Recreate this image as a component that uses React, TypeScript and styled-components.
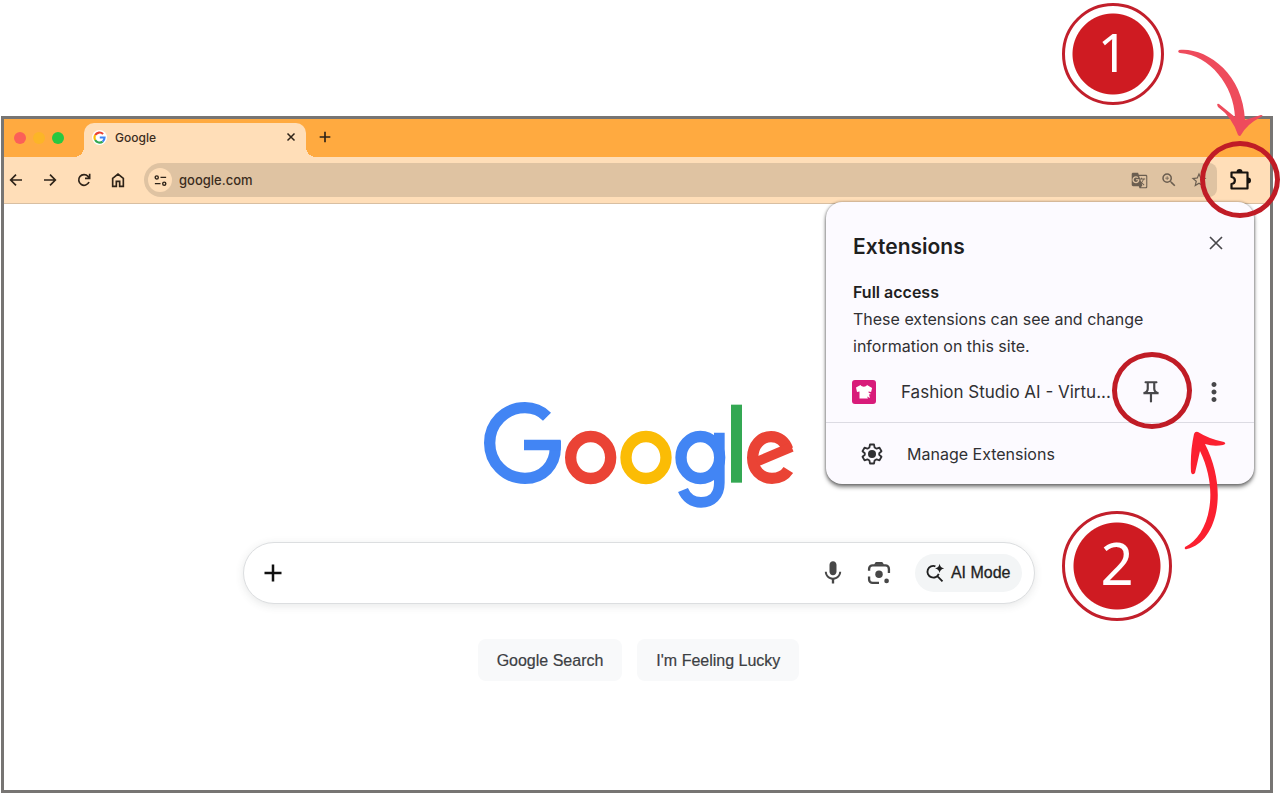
import React from "react";
import styled, { createGlobalStyle } from "styled-components";
import { MdOutlinePushPin, MdMoreVert, MdMic, MdStarBorder, MdZoomIn, MdGTranslate } from "react-icons/md";

const GlobalStyle = createGlobalStyle`
  *, *::before, *::after { box-sizing: border-box; }
  body { margin: 0; background: #fff; font-family: Inter, "Liberation Sans", sans-serif; color: #1f1f1f; }
  button, input { font: inherit; color: inherit; }
`;

const Page = styled.div`
  position: relative;
  min-height: 100vh;
  padding: 116px 7px 0 1px;
  display: flex;
  overflow: hidden;
`;

const BrowserWindow = styled.div`
  flex: 1;
  display: flex;
  flex-direction: column;
  border: 3px solid #777573;
  background: #fff;
`;

const TabStrip = styled.div`
  display: flex;
  align-items: flex-end;
  height: 38px;
  padding-left: 10px;
  background: #ffaa40;
`;

const TrafficLights = styled.div`
  display: flex;
  gap: 7px;
  align-self: center;
  width: 70px;
`;

const Light = styled.span<{ $color: string }>`
  width: 12px;
  height: 12px;
  border-radius: 50%;
  background: ${(p) => p.$color};
`;

const Tab = styled.div`
  position: relative;
  display: flex;
  align-items: center;
  gap: 8px;
  width: 222px;
  height: 34px;
  padding: 0 8px 6px;
  border-radius: 10px 10px 0 0;
  background: #ffdeb8;
  font-size: 12px;
  font-weight: 500;
  color: #3b2c1d;

  &::before, &::after {
    content: "";
    position: absolute;
    bottom: 0;
    width: 10px;
    height: 10px;
  }
  &::before { right: 100%; background: radial-gradient(circle at 0 0, transparent 10px, #ffdeb8 10px); }
  &::after { left: 100%; background: radial-gradient(circle at 100% 0, transparent 10px, #ffdeb8 10px); }
`;

const TabTitle = styled.span`
  flex: 1;
`;

const Favicon = styled.span`
  display: grid;
  place-items: center;
  width: 15px;
  height: 15px;
  border-radius: 50%;
  background: #fff;
`;

const IconButton = styled.button<{ $size?: number; $color?: string }>`
  display: grid;
  place-items: center;
  flex: none;
  width: ${(p) => p.$size ?? 20}px;
  height: ${(p) => p.$size ?? 20}px;
  padding: 0;
  border: 0;
  border-radius: 50%;
  background: none;
  color: ${(p) => p.$color ?? "#2e2318"};
  cursor: pointer;
`;

const NewTab = styled.div`
  height: 34px;
  padding: 3px 0 0 8px;
`;

const Toolbar = styled.div`
  display: flex;
  align-items: center;
  height: 47px;
  padding: 0 18px 0 2px;
  background: #ffdeb8;
  border-bottom: 1px solid #d8bfa2;
`;

const NavButtons = styled.nav`
  display: flex;
  gap: 14px;
  width: 138px;
`;

const Omnibox = styled.div`
  flex: 1;
  display: flex;
  align-items: center;
  height: 34px;
  padding: 0 8px 0 4px;
  border-radius: 17px 8px 8px 17px;
  background: #dfc3a2;
`;

const SiteInfo = styled(IconButton)`
  background: #ffdeb8;
`;

const UrlInput = styled.input`
  flex: 1;
  min-width: 0;
  padding: 0 0 0 7px;
  border: 0;
  outline: 0;
  background: none;
  font-size: 13px;
  font-weight: 500;
  color: #3b2c1d;
`;

const OmniboxActions = styled.div`
  display: flex;
  gap: 10px;
`;

const ExtensionSlot = styled.div`
  display: flex;
  padding-left: 11px;
`;

const Content = styled.main`
  flex: 1;
  display: flex;
  flex-direction: column;
  align-items: center;
  padding: 197px 22px 0 25px;
`;

const SearchForm = styled.form`
  display: flex;
  flex-direction: column;
  align-items: center;
  gap: 35px;
  width: 100%;
  max-width: 792px;
  margin-top: 33px;
`;

const SearchBox = styled.div`
  display: flex;
  align-items: center;
  width: 100%;
  height: 62px;
  padding: 0 12px 0 17px;
  border: 1px solid #dcdee0;
  border-radius: 31px;
  background: #fff;
  box-shadow: 0 2px 8px rgba(60, 64, 67, 0.12);
`;

const SearchInput = styled.input`
  flex: 1;
  min-width: 0;
  border: 0;
  outline: 0;
  padding: 0 12px;
  background: none;
  font-size: 16px;
`;

const SearchTools = styled.div`
  display: flex;
  align-items: center;
  gap: 18px;
`;

const AiMode = styled.button`
  display: flex;
  align-items: center;
  gap: 6px;
  height: 38px;
  margin-left: 4px;
  padding: 0 11px 0 10px;
  border: 0;
  border-radius: 19px;
  background: #f3f5f6;
  font-family: "Liberation Sans", Arial, sans-serif;
  font-size: 16px;
  color: #1f1f1f;
  -webkit-text-stroke: 0.3px #1f1f1f;
`;

const SearchButtons = styled.div`
  display: flex;
  gap: 15px;
`;

const SearchButton = styled.button`
  height: 42px;
  padding: 1px 19px 0;
  border: 0;
  border-radius: 8px;
  background: #f8f9fa;
  font-family: "Liberation Sans", Arial, sans-serif;
  font-size: 16px;
  color: #3c4043;
  -webkit-text-stroke: 0.2px #3c4043;
`;

const Popup = styled.section`
  position: absolute;
  top: 202px;
  right: 26px;
  width: 428px;
  border-radius: 16px;
  background: #fcfaff;
  box-shadow: 0 3px 4px rgba(0, 0, 0, 0.5), 0 0 3px rgba(0, 0, 0, 0.4);
`;

const PopupHeader = styled.header`
  display: flex;
  align-items: flex-start;
  justify-content: space-between;
  padding: 29px 26px 0 27px;
`;

const PopupTitle = styled.h2`
  margin: 0;
  font-size: 21px;
  line-height: 32px;
  font-weight: 600;
`;

const Access = styled.div`
  padding: 15px 27px 1px;
  font-size: 16px;
  line-height: 27px;
  color: #303033;
`;

const AccessTitle = styled.h3`
  margin: 0;
  font-size: 16px;
  line-height: 28px;
  font-weight: 600;
  color: #1f1f1f;
`;

const AccessText = styled.p`
  margin: 0;
  max-width: 320px;
`;

const ExtensionRow = styled.div`
  display: flex;
  align-items: center;
  height: 62px;
  padding: 0 25px 0 26px;
  border-bottom: 1px solid #dcdbe3;
  font-size: 17px;
  color: #303033;
`;

const ExtensionName = styled.span`
  flex: 1;
  padding-left: 25px;
  white-space: nowrap;
`;

const RowActions = styled.div`
  display: flex;
  align-items: center;
  gap: 35px;
`;

const ManageButton = styled.button`
  display: flex;
  align-items: center;
  gap: 23px;
  width: 100%;
  height: 61px;
  padding: 0 34px;
  border: 0;
  background: none;
  font-size: 16px;
  color: #303033;
`;

const StepBadge = styled.div<{ $top: number; $right: number; $size: number; $font: number; $ring: number }>`
  position: absolute;
  top: ${(p) => p.$top}px;
  right: ${(p) => p.$right}px;
  display: grid;
  place-items: center;
  width: ${(p) => p.$size}px;
  height: ${(p) => p.$size}px;
  padding-bottom: 6px;
  border: 3px solid #c21f2b;
  border-radius: 50%;
  background: radial-gradient(circle, #cf1b22 ${(p) => p.$ring}px, #fff ${(p) => p.$ring + 1}px);
  font-family: "Noto Sans", sans-serif;
  font-size: ${(p) => p.$font}px;
  line-height: 1;
  color: #fff;
`;

const Highlight = styled.div<{ $top: number; $right: number }>`
  position: absolute;
  top: ${(p) => p.$top}px;
  right: ${(p) => p.$right}px;
  width: 80px;
  height: 77px;
  border: 5px solid #c01c26;
  border-radius: 50%;
  pointer-events: none;
`;

const Arrow = styled.svg<{ $top: number; $right: number }>`
  position: absolute;
  top: ${(p) => p.$top}px;
  right: ${(p) => p.$right}px;
  pointer-events: none;
`;

type LineIconProps = { size: number; width?: number; children: React.ReactNode };
const LineIcon = ({ size, width = 2, children }: LineIconProps) => (
  <svg width={size} height={size} viewBox="0 0 24 24" fill="none" stroke="currentColor" strokeWidth={width} aria-hidden="true">
    {children}
  </svg>
);

const GoogleMark = () => (
  <svg width="13" height="13" viewBox="0 0 24 24" fill="none" strokeWidth="4" aria-hidden="true">
    <path stroke="#ea4335" d="M4 7.500A9.400 9.400 0 0 1 18.600 5.400" />
    <path stroke="#fbbc05" d="M4 7.500a9.400 9.400 0 0 0 0 9" />
    <path stroke="#34a853" d="M4 16.500A9.400 9.400 0 0 0 17.800 19.500" />
    <path stroke="#4285f4" d="M12.500 12H21.300C21.300 15 20 17.800 17.800 19.500" />
  </svg>
);

const GoogleLogo = () => (
  <svg width="312" height="108" viewBox="36 33 936 324" fill="none" role="img" aria-label="Google">
    <g stroke="#4285f4" strokeWidth="34">
      <path d="M228 80C210 62 188 53 162 53C102 53 56 101 56 159C56 218 102 265 162 265C216 265 253 225 253 172V152" />
      <path d="M159 165H269" strokeWidth="31" />
      <ellipse cx="688" cy="202.500" rx="58" ry="63" />
      <path d="M745 128V278C745 316 722 337 690 337C664 337 645 322 636 300" strokeWidth="32" />
    </g>
    <ellipse cx="359" cy="202.500" rx="60" ry="63" stroke="#ea4335" strokeWidth="34" />
    <ellipse cx="525" cy="202.500" rx="60" ry="63" stroke="#fbbc05" strokeWidth="34" />
    <rect x="780" y="44" width="33" height="234" fill="#34a853" />
    <g stroke="#ea4335">
      <path d="M952 240C941 257 924 265 903 265C869 265 845 239 845 203C845 166 870 140 900 140C925 140 942 155 950 178" strokeWidth="34" />
      <path d="M858 215L962 171" strokeWidth="29" />
    </g>
  </svg>
);

const ShirtIcon = () => (
  <svg width="24" height="24" viewBox="0 0 24 24" aria-hidden="true">
    <rect width="24" height="24" rx="3" fill="#d81b7a" />
    <path fill="#fff" d="M8.500 5 4 7.500 5 12l2.500-.6V18.500H16l-1-2 3 1.500-1-3.500 2-.4-2.500-1.700.1-1 2.500.6 1-4L15 5c-1 2.300-5.200 2.300-6.500 0z" />
  </svg>
);

export default function App() {
  return (
    <>
      <GlobalStyle />
      <Page>
        <BrowserWindow>
          <TabStrip>
            <TrafficLights>
              <Light $color="#fb6058" />
              <Light $color="#fcb527" />
              <Light $color="#28c840" />
            </TrafficLights>
            <Tab>
              <Favicon><GoogleMark /></Favicon>
              <TabTitle>Google</TabTitle>
              <IconButton $size={14} aria-label="Close tab">
                <LineIcon size={12} width={3}><path d="m5 5 14 14M19 5 5 19" /></LineIcon>
              </IconButton>
            </Tab>
            <NewTab>
              <IconButton $size={22} aria-label="New tab">
                <LineIcon size={16} width={2.500}><path d="M12 4v16M4 12h16" /></LineIcon>
              </IconButton>
            </NewTab>
          </TabStrip>

          <Toolbar>
            <NavButtons aria-label="Navigation">
              <IconButton aria-label="Back">
                <LineIcon size={16} width={2.500}><path d="M21 12H4M12 4l-8 8 8 8" /></LineIcon>
              </IconButton>
              <IconButton aria-label="Forward">
                <LineIcon size={16} width={2.500}><path d="M3 12h17M12 4l8 8-8 8" /></LineIcon>
              </IconButton>
              <IconButton aria-label="Reload">
                <LineIcon size={16} width={2.500}><path d="M19.500 15A8 8 0 1 1 18 6.500L20 9M20.500 2.500V9.500H13.500" /></LineIcon>
              </IconButton>
              <IconButton aria-label="Home">
                <LineIcon size={16} width={2.500}><path d="M4 9.500 12 3l8 6.500V21.500H14.500V14h-5v7.500H4z" /></LineIcon>
              </IconButton>
            </NavButtons>
            <Omnibox>
              <SiteInfo $size={24} aria-label="View site information">
                <LineIcon size={15} width={2.200}>
                  <circle cx="6" cy="7" r="2.500" /><path d="M12 7h9M3 17h9" /><circle cx="18" cy="17" r="2.500" />
                </LineIcon>
              </SiteInfo>
              <UrlInput aria-label="Address" defaultValue="google.com" />
              <OmniboxActions>
                <IconButton $color="#6b5e50" aria-label="Translate this page"><MdGTranslate size={17} /></IconButton>
                <IconButton $color="#6b5e50" aria-label="Zoom"><MdZoomIn size={18} /></IconButton>
                <IconButton $color="#6b5e50" aria-label="Bookmark this tab"><MdStarBorder size={18} /></IconButton>
              </OmniboxActions>
            </Omnibox>
            <ExtensionSlot>
              <IconButton $size={24} $color="#17130f" aria-label="Extensions">
                <LineIcon size={24} width={2.200}>
                  <path strokeLinejoin="round" d="M3.500 4.500H19.500V20.500H3.500V16C8 15.500 8 9.500 3.500 9z" />
                  <path fill="currentColor" stroke="none" d="M8.500 4a3 3 0 0 1 6 0zM20 9.500a3 3 0 0 1 0 6z" />
                </LineIcon>
              </IconButton>
            </ExtensionSlot>
          </Toolbar>

          <Content>
            <GoogleLogo />
            <SearchForm role="search" onSubmit={(e) => e.preventDefault()}>
              <SearchBox>
                <IconButton type="button" $size={24} $color="#111" aria-label="Add files">
                  <LineIcon size={24} width={2.500}><path d="M12 3.500v17M3.500 12h17" /></LineIcon>
                </IconButton>
                <SearchInput aria-label="Search" />
                <SearchTools>
                  <IconButton type="button" $size={28} $color="#474747" aria-label="Search by voice"><MdMic size={28} /></IconButton>
                  <IconButton type="button" $size={28} $color="#474747" aria-label="Search by image">
                    <LineIcon size={28} width={2}>
                      <path d="M3.500 10V8.500a3 3 0 0 1 3-3h11a3 3 0 0 1 3 3V12M3.500 15v2.500a3 3 0 0 0 3 3H12" />
                      <path d="M8.500 4.500 9.500 3h5l1 1.500z" fill="currentColor" strokeWidth="1" />
                      <circle cx="12" cy="13" r="3.200" fill="currentColor" stroke="none" />
                      <circle cx="18.500" cy="18.800" r="2" fill="currentColor" stroke="none" />
                    </LineIcon>
                  </IconButton>
                  <AiMode type="button">
                    <LineIcon size={20} width={2.200}>
                      <path d="M12.500 4A7 7 0 1 0 16.500 13M14.500 15.500 21 22" />
                      <path fill="currentColor" stroke="none" d="M17.500 1c.7 3.500 2 4.800 5.500 5.500-3.500.7-4.800 2-5.500 5.500-.7-3.500-2-4.800-5.500-5.500 3.500-.7 4.800-2 5.500-5.500z" />
                    </LineIcon>
                    AI Mode
                  </AiMode>
                </SearchTools>
              </SearchBox>
              <SearchButtons>
                <SearchButton type="submit">Google Search</SearchButton>
                <SearchButton type="button">I'm Feeling Lucky</SearchButton>
              </SearchButtons>
            </SearchForm>
          </Content>
        </BrowserWindow>

        <Popup aria-label="Extensions">
          <PopupHeader>
            <PopupTitle>Extensions</PopupTitle>
            <IconButton $size={24} $color="#47474a" aria-label="Close">
              <LineIcon size={18} width={2.200}><path d="M4 4l16 16M20 4 4 20" /></LineIcon>
            </IconButton>
          </PopupHeader>
          <Access>
            <AccessTitle>Full access</AccessTitle>
            <AccessText>These extensions can see and change information on this site.</AccessText>
          </Access>
          <ExtensionRow>
            <ShirtIcon />
            <ExtensionName>Fashion Studio AI - Virtu...</ExtensionName>
            <RowActions>
              <IconButton $size={26} $color="#47474a" aria-label="Pin extension"><MdOutlinePushPin size={26} /></IconButton>
              <IconButton $size={30} $color="#47474a" aria-label="More options"><MdMoreVert size={30} /></IconButton>
            </RowActions>
          </ExtensionRow>
          <ManageButton>
            <LineIcon size={24} width={1.800}>
              <path strokeLinejoin="round" d="M10 2.500h4l.6 3 2 1.200 2.900-1 2 3.500-2.300 2v1.600l2.300 2-2 3.500-2.900-1-2 1.200-.6 3h-4l-.6-3-2-1.200-2.900 1-2-3.500 2.300-2v-1.600l-2.300-2 2-3.500 2.900 1 2-1.200z" />
              <circle cx="12" cy="12" r="4" fill="currentColor" stroke="none" />
            </LineIcon>
            Manage Extensions
          </ManageButton>
        </Popup>

        <StepBadge $top={3} $right={116} $size={102} $font={53} $ring={40}>1</StepBadge>
        <StepBadge $top={511} $right={108} $size={110} $font={58} $ring={43}>2</StepBadge>
        <Highlight $top={141} $right={0} />
        <Highlight $top={352} $right={88} />
        <Arrow $top={46} $right={14} width="92" height="92" viewBox="1174 46 92 92" aria-hidden="true">
          <path fill="#ee4b5c" d="M1179 50C1205 47 1243 72 1245 120L1261 115Q1264 115 1261 117Q1247 124 1241 135Q1240 137 1238 135Q1232 117 1218 107Q1216 103 1219 104L1235 117C1234 86 1210 55 1180 53Q1177 52 1179 50Z" />
        </Arrow>
        <Arrow $top={428} $right={50} width="50" height="126" viewBox="1180 428 50 126" aria-hidden="true">
          <path fill="#fb2030" d="M1185 547C1207 537 1221 495 1200 451L1195 473Q1192 476 1191 472Q1190 452 1194 434Q1195 431 1198 432Q1209 439 1224 442Q1227 444 1223 445Q1214 447 1205 444C1229 491 1217 542 1187 549Q1184 550 1185 547Z" />
        </Arrow>
      </Page>
    </>
  );
}
